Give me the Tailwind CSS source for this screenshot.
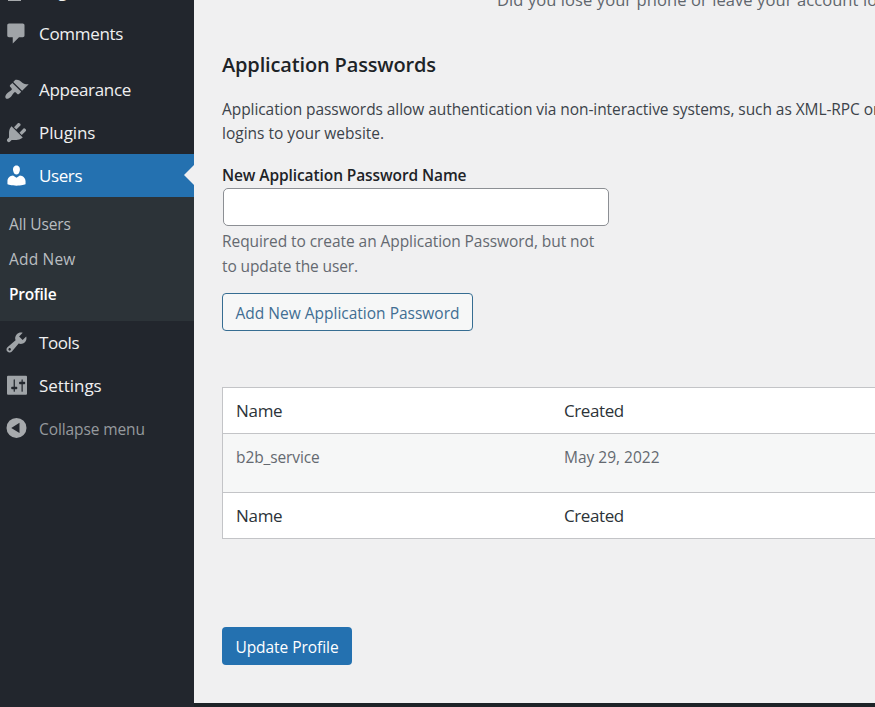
<!DOCTYPE html>
<html lang="en">
<head>
<meta charset="utf-8">
<title>Profile</title>
<script src="https://cdn.jsdelivr.net/npm/@tailwindcss/browser@4"></script>
</head>
<body class="w-[875px] h-[707px] overflow-hidden bg-[#1d2327] font-['Open_Sans','Noto_Sans',sans-serif] text-[15.5px] text-[#3c434a]">
<div class="flex h-[707px]">
  <nav class="w-[194px] shrink-0 bg-[#22262d] text-[#f0f0f1] text-[17px] overflow-hidden">
    <div class="h-3 relative overflow-hidden">
      <div class="absolute left-[39px] -top-[21px] leading-6 tracking-[-0.3px]">Pages</div>
      <div class="absolute left-2 top-0 w-[13px] h-px bg-[#a7aaad]"></div>
    </div>
    <a class="flex items-center h-[43px] pl-[4px] gap-[10px]"><svg class="size-[25px] fill-[#a0a4a8]" viewBox="0 0 20 20"><path d="M4 2h11c.8 0 1.4.6 1.4 1.4v8.2c0 .8-.6 1.4-1.4 1.4h-3l-5 5v-5H4c-.8 0-1.4-.6-1.4-1.4V3.4C2.6 2.6 3.2 2 4 2z"/></svg><span class="tracking-[-0.3px]">Comments</span></a>
    <a class="flex items-center h-[43px] mt-[13px] pl-[4px] gap-[10px]"><svg class="size-[25px] fill-[#a0a4a8]" viewBox="0 0 20 20"><path d="M14.48 11.06L7.41 3.99l1.5-1.5c.5-.56 2.3-.47 3.51.32 1.21.8 1.43 1.28 2.91 2.1 1.18.64 2.45 1.26 4.45.85zm-.71.71L6.7 4.7 4.93 6.47c-.39.39-.39 1.02 0 1.41l1.06 1.06c.39.39.39 1.03 0 1.42-.6.6-1.43 1.11-2.21 1.69-.35.26-.7.53-1.01.84C1.43 14.23.4 16.08 1.4 17.07c.99 1 2.84-.03 4.18-1.36.31-.31.58-.66.85-1.02.57-.78 1.08-1.61 1.69-2.21.39-.39 1.02-.39 1.41 0l1.06 1.06c.39.39 1.02.39 1.41 0z"/></svg><span class="tracking-[-0.3px]">Appearance</span></a>
    <a class="flex items-center h-[43px] pl-[4px] gap-[10px]"><svg class="size-[25px] fill-[#a0a4a8]" viewBox="0 0 20 20"><path d="M13.11 4.36L9.87 7.6 8 5.73l3.24-3.24c.35-.34 1.05-.2 1.56.32.52.51.66 1.21.31 1.55zm-8 1.77l.91-1.12 9.01 9.01-1.19.84c-.71.71-2.63 1.16-3.82 1.16H6.14L4.9 17.26c-.59.59-1.54.59-2.12 0-.59-.58-.59-1.53 0-2.12l1.24-1.24v-3.88c0-1.13.4-3.19 1.09-3.89zm7.26 3.97l3.24-3.24c.34-.35 1.04-.21 1.55.31.52.51.66 1.21.31 1.55l-3.24 3.25z"/></svg><span class="tracking-[-0.1px]">Plugins</span></a>
    <a class="relative flex items-center h-[43px] pl-[4px] gap-[10px] bg-[#2471b0] text-white"><svg class="size-[25px] fill-white" viewBox="0 0 20 20"><path d="M10 9.25c-2.27 0-2.73-3.44-2.73-3.44C7 4.02 7.82 2 9.97 2c2.16 0 2.98 2.02 2.71 3.81 0 0-.41 3.44-2.68 3.44zm0 2.57L12.72 10c2.39 0 4.52 2.33 4.52 4.53v2.49s-3.65 1.13-7.24 1.13c-3.65 0-7.24-1.13-7.24-1.13v-2.49c0-2.25 1.94-4.48 4.47-4.48z"/></svg><span class="tracking-[-0.4px]">Users</span>
      <svg class="absolute right-0 top-[11px] w-[10px] h-5 fill-[#f0f0f1]" viewBox="0 0 10 20"><path d="M10 0L0 10l10 10z"/></svg></a>
    <div class="h-[124px] bg-[#2c3338] pt-[10px] pl-[9px] text-[15.5px] text-[#b9bdc0] leading-[35px]">
      <div><span class="tracking-[-0.1px]">All Users</span></div>
      <div><span class="tracking-[0.2px]">Add New</span></div>
      <div class="text-white font-semibold"><span class="tracking-[-0.2px]">Profile</span></div>
    </div>
    <a class="flex items-center h-[43px] pl-[4px] gap-[10px]"><svg class="size-[25px] fill-[#a0a4a8]" viewBox="0 0 20 20"><path d="M16.68 9.77c-1.34 1.34-3.3 1.67-4.95.99l-5.41 6.52c-.99.99-2.59.99-3.58 0s-.99-2.59 0-3.57l6.52-5.42c-.68-1.65-.35-3.61.99-4.95 1.28-1.28 3.12-1.62 4.72-1.06l-2.89 2.89 2.82 2.82 2.86-2.87c.53 1.58.18 3.39-1.08 4.65zM3.81 16.21c.4.39 1.04.39 1.43 0 .4-.4.4-1.04 0-1.43-.39-.4-1.03-.4-1.43 0-.39.39-.39 1.03 0 1.43z"/></svg><span class="tracking-[-0.4px]">Tools</span></a>
    <a class="flex items-center h-[43px] pl-[4px] gap-[10px]"><svg class="size-[25px] fill-[#a0a4a8]" viewBox="0 0 20 20"><path d="M18.4 16.6V2.9c0-.5-.3-.8-.8-.8H3.2c-.5 0-.8.3-.8.8v13.7c0 .5.3.8.8.8h14.4c.5 0 .8-.3.8-.8zM8.7 11h1c.55 0 1 .45 1 1s-.45 1-1 1h-1v1.5c0 .28-.22.5-.5.5s-.5-.22-.5-.5V13h-1c-.55 0-1-.45-1-1s.45-1 1-1h1V5.5c0-.28.22-.5.5-.5s.5.22.5.5V11zm5.3-2h-1c-.55 0-1-.45-1-1s.45-1 1-1h1V5.5c0-.28.22-.5.5-.5s.5.22.5.5V7h1c.55 0 1 .45 1 1s-.45 1-1 1h-1v5.5c0 .28-.22.5-.5.5s-.5-.22-.5-.5V9z"/></svg><span class="tracking-[-0.05px]">Settings</span></a>
    <a class="flex items-center h-[43px] pl-[4px] gap-[10px] text-[15.5px] text-[#969a9e]"><svg class="size-[25px] fill-[#a7aaad]" viewBox="0 0 20 20"><path fill-rule="evenodd" d="M10 1.5a8 8 0 1 0 0 16a8 8 0 0 0 0-16zM12.4 5.4v8.2L5.8 9.5z"/></svg><span class="pt-[3px] tracking-[-0.1px]">Collapse menu</span></a>
  </nav>
  <main class="h-[703px] w-[681px] shrink-0 bg-[#f0f0f1] pl-7 overflow-hidden">
    <div class="flow-root h-[50px] pl-[275px] whitespace-nowrap text-[16.5px] text-[#5f666d]"><div class="-mt-3 leading-6"><span class="tracking-[0.09px]">Did you lose your phone or leave your account logged in</span></div></div>
    <h2 class="h-[47px] leading-[30px] text-[20px] font-semibold text-[#1d2327]"><span class="tracking-[-0.15px]">Application Passwords</span></h2>
    <p class="w-[800px] leading-6 whitespace-nowrap"><span class="tracking-[-0.07px]">Application passwords allow authentication via non-interactive systems, such as XML-RPC or</span><br><span>logins to your website.</span></p>
    <div class="mt-[18px] h-[25px] leading-6 font-semibold text-[#1d2327]"><span class="tracking-[-0.1px]">New Application Password Name</span></div>
    <div class="ml-px w-[386px] h-[38px] rounded-[5px] border border-[#8c8f94] bg-white"></div>
    <p class="mt-[3px] leading-[25px] text-[#646970]"><span class="tracking-[-0.07px]">Required to create an Application Password, but not</span><br><span class="tracking-[-0.1px]">to update the user.</span></p>
    <button class="mt-[14px] flex justify-center items-center w-[251px] h-[38px] rounded-[4px] border border-[#366d92] bg-[#f6f7f7] text-[#416e93]"><span class="pt-1">Add New Application Password</span></button>
    <div class="mt-14 w-[700px] h-[152px] border border-[#c3c4c7] bg-white text-[#2c3338]">
      <div class="grid grid-cols-[328px_1fr] h-[46px] items-center pl-[13px] text-[17px] border-b border-[#c3c4c7]"><span class="tracking-[-0.3px]">Name</span><span class="tracking-[-0.4px]">Created</span></div>
      <div class="grid grid-cols-[328px_1fr] h-[59px] pt-[11px] leading-6 pl-[13px] bg-[#f6f7f7] text-[#646970] border-b border-[#c3c4c7]"><span class="tracking-[-0.1px]">b2b_service</span><span>May 29, 2022</span></div>
      <div class="grid grid-cols-[328px_1fr] h-[45px] items-center pl-[13px] text-[17px]"><span class="tracking-[-0.3px]">Name</span><span class="tracking-[-0.4px]">Created</span></div>
    </div>
    <button class="mt-[88px] flex justify-center items-center w-[130px] h-[38px] rounded-[4px] bg-[#2471b0] text-white"><span class="pt-1 tracking-[-0.05px]">Update Profile</span></button>
  </main>
</div>
</body>
</html>
